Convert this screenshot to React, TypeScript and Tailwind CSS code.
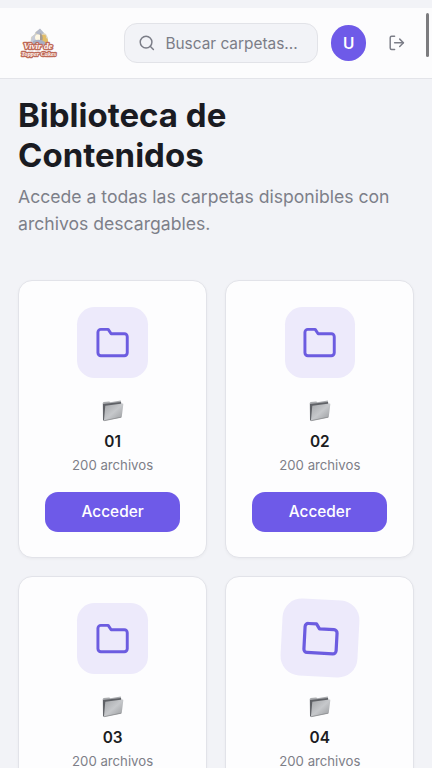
import React from 'react';

const FONT = "font-['Inter','Liberation_Sans',sans-serif]";

function Logo() {
  return (
    <svg width="40" height="34" viewBox="0 0 40 34" className="block shrink-0 overflow-visible" aria-label="Vivir de Topper Cakes">
      <path d="M11.5 18 L12 11 L15 9 L17 5.5 L21 3 L24 6.5 L27 8 L29 12 L28.5 18 Z" fill="#ddd5bf" />
      <path d="M16 7 L21 2.5 L25 7 L21 9 Z" fill="#b4bac9" />
      <path d="M12 16 Q12 9 17 8 L17 16 Z" fill="#c7cbd6" />
      <path d="M23 9 q5 -1 4 3 q3 1 1.5 5 l-5.5 1 z" fill="#e3bd66" />
      <circle cx="19" cy="11.5" r="3" fill="#fff8e4" />
      <path d="M21 7 q3.5 2 2.5 7 l-2.5 1.5 z" fill="#a59b91" />
      <path d="M14 15 q7 -3 12 1 v3 H14 Z" fill="#a8afc4" />
      <g fontFamily="Liberation Serif, serif" fontStyle="italic" fontWeight="700" fill="#fff4f2" stroke="#bd6a58" strokeWidth="2.4" strokeLinejoin="round" paintOrder="stroke">
        <text x="4.5" y="23.4" fontSize="8" textLength="29" lengthAdjust="spacingAndGlyphs">Vivir de</text>
        <text x="2.3" y="30" fontSize="7" textLength="35" lengthAdjust="spacingAndGlyphs">Topper Cakes</text>
      </g>
    </svg>
  );
}

function SearchIcon() {
  return (
    <svg width="17.6" height="17.6" viewBox="0 0 24 24" fill="none" stroke="currentColor" strokeWidth="2" strokeLinecap="round" strokeLinejoin="round" className="shrink-0">
      <circle cx="11" cy="11" r="8" />
      <path d="m21 21-4.35-4.35" />
    </svg>
  );
}

function LogoutIcon() {
  return (
    <svg width="17.6" height="17.6" viewBox="0 0 24 24" fill="none" stroke="currentColor" strokeWidth="2" strokeLinecap="round" strokeLinejoin="round" className="shrink-0">
      <path d="M9 21H5a2 2 0 0 1-2-2V5a2 2 0 0 1 2-2h4" />
      <path d="m16 17 5-5-5-5" />
      <path d="M21 12H9" />
    </svg>
  );
}

function FolderIcon() {
  return (
    <svg width="35.2" height="35.2" viewBox="0 0 24 24" fill="none" stroke="currentColor" strokeWidth="2" strokeLinecap="round" strokeLinejoin="round">
      <path d="M22 19a2 2 0 0 1-2 2H4a2 2 0 0 1-2-2V5a2 2 0 0 1 2-2h5l2 3h9a2 2 0 0 1 2 2z" />
    </svg>
  );
}

function MetalFolder() {
  return (
    <svg width="22" height="22" viewBox="0 0 22 22" className="block">
      <defs>
        <linearGradient id="folderFront" x1="0" y1="0" x2="1" y2="1">
          <stop offset="0" stopColor="#a3a5a8" />
          <stop offset="0.5" stopColor="#c6c8cb" />
          <stop offset="1" stopColor="#97999c" />
        </linearGradient>
      </defs>
      <path d="M0.7 3 L1.6 1.9 L7.2 1.5 L8.4 2.2 L18.8 0.6 L19.3 4 L2.5 20.6 L1 20.4 Z" fill="#a9abae" />
      <path d="M1 4 L19 2.1 L19.3 5 L2.4 20.6 L1.1 20.3 Z" fill="#5f6166" />
      <path d="M3.3 5.8 L20.6 3.5 Q21.5 3.4 21.3 4.5 L19.8 16.4 Q19.7 17.3 18.8 17.5 L1.9 20.9 Z" fill="url(#folderFront)" />
      <path d="M2.2 20.7 L19.3 17.2" stroke="#7f8184" strokeWidth="0.7" />
    </svg>
  );
}

function Card({ name, active = false }: { name: string; active?: boolean }) {
  return (
    <article className="flex h-[278px] flex-col items-center rounded-[14px] border border-[#e2e3e9] bg-[#fdfdfe] px-[26px] pt-[26px] shadow-[0_1px_3px_rgba(0,0,0,0.04)]">
      <div className={`flex size-[70.4px] shrink-0 items-center justify-center rounded-[17.6px] bg-[#edeafb] text-[#6c5ce0] ${active ? 'scale-110 rotate-3' : ''}`}>
        <FolderIcon />
      </div>
      <div className="mt-[22px]">
        <MetalFolder />
      </div>
      <h3 className="mt-[9px] text-[15.4px] leading-[22px] font-semibold text-[#1b1c22]">{name}</h3>
      <p className="mt-[2px] text-[13.2px] leading-[20px] whitespace-nowrap text-[#7d7f88]">200 archivos</p>
      <button className="mt-[17.6px] h-[39.6px] w-full shrink-0 rounded-[13px] bg-[#6e5ae8] pb-px text-[15.4px] font-medium text-white">Acceder</button>
    </article>
  );
}

export default function App() {
  return (
    <div className={`relative h-[768px] w-[432px] overflow-hidden bg-[#f2f3f7] pt-[8px] ${FONT}`}>
      <header className="flex h-[71px] items-center border-b border-[#e3e4e9] bg-[#fcfcfd] pl-[19px]">
        <Logo />
        <div className="ml-[65px] flex h-[40px] w-[194px] items-center gap-[10px] rounded-[13px] border border-[#e2e3e8] bg-[#f2f3f7] pl-[12.8px] text-[#7b7d87]">
          <SearchIcon />
          <span className="pt-px text-[15.4px] leading-5 whitespace-nowrap">Buscar carpetas...</span>
        </div>
        <div className="ml-[13px] flex size-[35.2px] shrink-0 items-center justify-center rounded-full bg-[#6e5ae8] pt-px text-[15.4px] font-semibold text-white">U</div>
        <button className="ml-[22px] text-[#7b7d87]" aria-label="Salir">
          <LogoutIcon />
        </button>
      </header>
      <main className="pt-[17px] pr-[17.6px] pl-[18px]">
        <h1 className="text-[33px] leading-[39.6px] font-bold text-[#1a1b22]">
          Biblioteca de
          <br />
          Contenidos
        </h1>
        <p className="mt-[9px] text-[17.6px] leading-[26.4px] text-[#7d7f89]">
          Accede a todas las carpetas disponibles con archivos descargables.
        </p>
        <section className="mt-[43.4px] grid grid-cols-2 gap-[18px]">
          <Card name="01" />
          <Card name="02" />
          <Card name="03" />
          <Card name="04" active />
        </section>
      </main>
      <div className="absolute top-[13px] right-[3px] h-[44px] w-[3px] rounded-full bg-[#7c7c7f]" />
    </div>
  );
}
